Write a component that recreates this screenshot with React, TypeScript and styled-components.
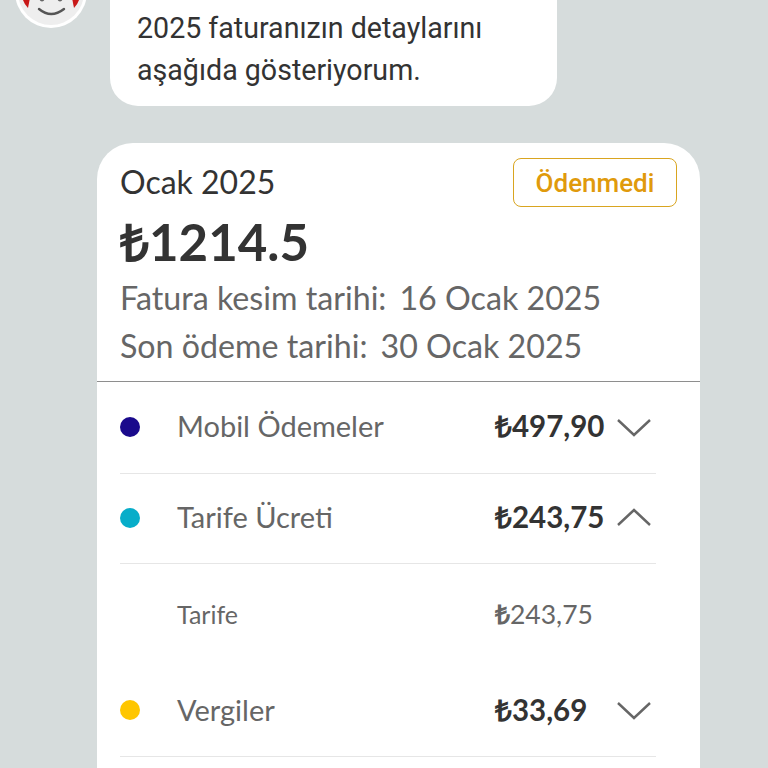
import React from "react";
import styled, { createGlobalStyle } from "styled-components";

const Global = createGlobalStyle`
  html, body { margin: 0; padding: 0; background: #d6dcdc; }
  body { width: 768px; height: 768px; overflow: hidden; }
`;

const Page = styled.div`
  width: 768px;
  height: 768px;
  overflow: hidden;
  background: #d6dcdc;
  display: flex;
  flex-direction: column;
  gap: 37px;
  font-family: Lato, "Open Sans", sans-serif;
`;

const ChatRow = styled.div`
  height: 106px;
  flex: none;
  display: flex;
  padding-left: 15px;
  gap: 23px;
`;

const Avatar = styled.svg`
  width: 72px;
  height: 72px;
  flex: none;
  margin-top: -44px;
`;

const Bubble = styled.div`
  width: 447px;
  height: 106px;
  box-sizing: border-box;
  background: #fff;
  border-radius: 0 0 28px 28px;
  padding: 7px 27px 0;
  font-family: Roboto, sans-serif;
  font-size: 28.6px;
  line-height: 42px;
  color: #333;
`;

const Card = styled.section`
  width: 603px;
  margin-left: 97px;
  background: #fff;
  border-radius: 36px 36px 0 0;
  flex: 1;
`;

const Summary = styled.header`
  position: relative;
  height: 239px;
  box-sizing: border-box;
  padding: 19px 23px 0;
  border-bottom: 1px solid #8e8e8e;
`;

const Month = styled.div`
  font-size: 32px;
  line-height: 40px;
  color: #333;
`;

const Total = styled.div`
  font-size: 51px;
  line-height: 64px;
  font-weight: 700;
  color: #333;
  margin-top: 7px;
`;

const Lira = styled.span`
  font-family: "Open Sans", sans-serif;
  font-weight: 600;
`;

const DateLine = styled.div`
  font-size: 32.2px;
  line-height: 48px;
  color: #666;
  display: flex;
  gap: 13px;
`;

const Status = styled.div`
  position: absolute;
  top: 15px;
  right: 23px;
  width: 164px;
  height: 49px;
  box-sizing: border-box;
  border: 1px solid #d9a520;
  border-radius: 8px;
  display: flex;
  align-items: center;
  justify-content: center;
  font-family: Roboto, sans-serif;
  font-size: 26px;
  font-weight: 500;
  color: #e09a0c;
`;

const Rows = styled.div`
  padding: 0 44px 0 23px;
`;

const Row = styled.div<{ $h: number }>`
  height: ${(p) => p.$h}px;
  box-sizing: border-box;
  display: flex;
  align-items: center;
  padding: 0 5px 2px 0;
  border-bottom: 1px solid #e6e6e6;
`;

const SubRow = styled.div`
  height: 102px;
  display: flex;
  align-items: center;
  padding-left: 57px;
  padding-bottom: 2px;
  box-sizing: border-box;
`;

const Dot = styled.span<{ $c: string }>`
  width: 20px;
  height: 20px;
  border-radius: 50%;
  flex: none;
  background: ${(p) => p.$c};
  margin-right: 37px;
`;

const Label = styled.span`
  flex: 1;
  font-size: 29px;
  margin-bottom: 2px;
  color: #666;
`;

const SubLabel = styled.span`
  flex: 1;
  font-size: 25px;
  color: #666;
`;

const Amount = styled.span`
  width: 122px;
  font-size: 29.5px;
  font-weight: 700;
  margin-bottom: 2px;
  color: #333;
  white-space: nowrap;
`;

const SubAmount = styled.span`
  width: 161px;
  font-size: 26.5px;
  color: #666;
`;

const Chevron = styled.svg`
  width: 34px;
  height: 20px;
  flex: none;
  fill: none;
  stroke: #666;
  stroke-width: 2.4;
`;

const Down = () => (
  <Chevron viewBox="0 0 34 20"><path d="M1 3 L17 18 L33 3" /></Chevron>
);
const Up = () => (
  <Chevron viewBox="0 0 34 20"><path d="M1 17 L17 2 L33 17" /></Chevron>
);

export default function App() {
  return (
    <Page>
      <Global />
      <ChatRow>
        <Avatar viewBox="0 0 72 72">
          <circle cx="36" cy="36" r="36" fill="#fff" />
          <circle cx="36" cy="36" r="33" fill="#eeeeee" />
          <path d="M7 40 Q8 47 13 52 L15 42 Z" fill="#c81818" />
          <path d="M65 40 Q64 47 59 52 L57 42 Z" fill="#c81818" />
          <circle cx="27" cy="43" r="2.4" fill="#666" />
          <circle cx="45" cy="43" r="2.4" fill="#666" />
          <path d="M24 53 Q36 63 49 53" fill="none" stroke="#555" strokeWidth="2.4" strokeLinecap="round" />
        </Avatar>
        <Bubble>
          2025 faturanızın detaylarını
          <br />
          aşağıda gösteriyorum.
        </Bubble>
      </ChatRow>
      <Card>
        <Summary>
          <Month>Ocak 2025</Month>
          <Total><Lira>₺</Lira>1214.5</Total>
          <DateLine><span>Fatura kesim tarihi:</span><span>16 Ocak 2025</span></DateLine>
          <DateLine><span>Son ödeme tarihi:</span><span>30 Ocak 2025</span></DateLine>
          <Status>Ödenmedi</Status>
        </Summary>
        <Rows>
          <Row $h={92}>
            <Dot $c="#1a0a8c" />
            <Label>Mobil Ödemeler</Label>
            <Amount><Lira>₺</Lira>497,90</Amount>
            <Down />
          </Row>
          <Row $h={90}>
            <Dot $c="#07adc9" />
            <Label>Tarife Ücreti</Label>
            <Amount><Lira>₺</Lira>243,75</Amount>
            <Up />
          </Row>
          <SubRow>
            <SubLabel>Tarife</SubLabel>
            <SubAmount><Lira>₺</Lira>243,75</SubAmount>
          </SubRow>
          <Row $h={91}>
            <Dot $c="#fec600" />
            <Label>Vergiler</Label>
            <Amount><Lira>₺</Lira>33,69</Amount>
            <Down />
          </Row>
        </Rows>
      </Card>
    </Page>
  );
}
